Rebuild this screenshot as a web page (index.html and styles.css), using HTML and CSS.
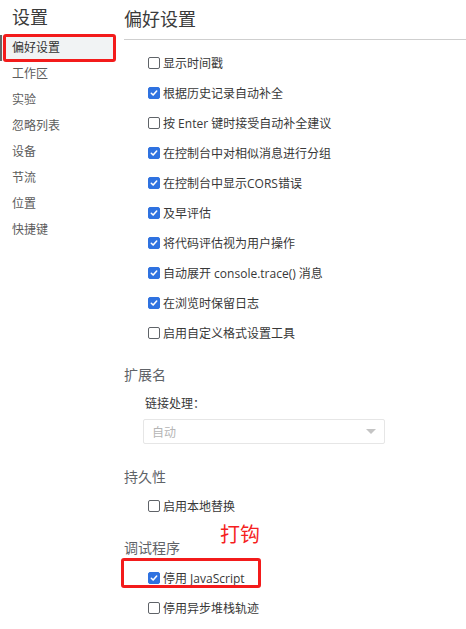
FILE: index.html
```html
<!DOCTYPE html>
<html lang="zh">
<head>
<meta charset="utf-8">
<link rel="stylesheet" href="styles.css">
</head>
<body>
<div class="app">
  <nav class="sidebar">
    <div class="side-title">设置</div>
    <div class="side-item selected">偏好设置</div>
    <div class="side-item">工作区</div>
    <div class="side-item">实验</div>
    <div class="side-item">忽略列表</div>
    <div class="side-item">设备</div>
    <div class="side-item">节流</div>
    <div class="side-item">位置</div>
    <div class="side-item">快捷键</div>
  </nav>
  <main class="main">
    <div class="main-title">偏好设置</div>
    <div class="list">
      <div class="row"><span class="cb"></span>显示时间戳</div>
      <div class="row"><span class="cb on"><svg viewBox="0 0 13 13"><path d="M3 6.8 L5.4 9.2 L10 4" /></svg></span>根据历史记录自动补全</div>
      <div class="row"><span class="cb"></span>按 Enter 键时接受自动补全建议</div>
      <div class="row"><span class="cb on"><svg viewBox="0 0 13 13"><path d="M3 6.8 L5.4 9.2 L10 4" /></svg></span>在控制台中对相似消息进行分组</div>
      <div class="row"><span class="cb on"><svg viewBox="0 0 13 13"><path d="M3 6.8 L5.4 9.2 L10 4" /></svg></span>在控制台中显示CORS错误</div>
      <div class="row"><span class="cb on"><svg viewBox="0 0 13 13"><path d="M3 6.8 L5.4 9.2 L10 4" /></svg></span>及早评估</div>
      <div class="row"><span class="cb on"><svg viewBox="0 0 13 13"><path d="M3 6.8 L5.4 9.2 L10 4" /></svg></span>将代码评估视为用户操作</div>
      <div class="row"><span class="cb on"><svg viewBox="0 0 13 13"><path d="M3 6.8 L5.4 9.2 L10 4" /></svg></span>自动展开 console.trace() 消息</div>
      <div class="row"><span class="cb on"><svg viewBox="0 0 13 13"><path d="M3 6.8 L5.4 9.2 L10 4" /></svg></span>在浏览时保留日志</div>
      <div class="row"><span class="cb"></span>启用自定义格式设置工具</div>
    </div>
    <div class="section-title first">扩展名</div>
    <div class="field-label">链接处理：</div>
    <div class="select"><span>自动</span><span class="arrow"></span></div>
    <div class="section-title second">持久性</div>
    <div class="row"><span class="cb"></span>启用本地替换</div>
    <div class="section-title third">调试程序</div>
    <div class="row"><span class="cb on"><svg viewBox="0 0 13 13"><path d="M3 6.8 L5.4 9.2 L10 4" /></svg></span>停用 JavaScript</div>
    <div class="row"><span class="cb"></span>停用异步堆栈轨迹</div>
  </main>
  <div class="mark mark-side"></div>
  <div class="mark mark-js"></div>
  <div class="note">打钩</div>
</div>
</body>
</html>
```

FILE: styles.css
```css
* { box-sizing: border-box; }
html, body { margin: 0; padding: 0; background: #fff; }
body {
  font-family: "Open Sans", "Noto Sans CJK SC", sans-serif;
  font-size: 12px;
  color: #383838;
  width: 466px;
  height: 629px;
  overflow: hidden;
}
.app { position: relative; display: flex; height: 629px; }
.sidebar { width: 118px; flex: none; }
.side-title {
  height: 35px;
  padding: 4px 0 0 12px;
  font-size: 18px;
  line-height: 26px;
  color: #3a3a3a;
}
.side-item {
  height: 26px;
  line-height: 26px;
  padding-left: 12px;
  color: #5c5c5c;
}
.side-item.selected {
  background: #f1f3f4;
  color: #333;
  box-shadow: inset 2px 0 0 #666;
  margin-right: 4px;
}
.main { flex: 1; padding-left: 6px; }
.main-title {
  height: 40px;
  padding-top: 6px;
  font-size: 18px;
  line-height: 26px;
  color: #3a3a3a;
  border-bottom: 1px solid #cfcfcf;
}
.list { padding-top: 8px; }
.row {
  display: flex;
  align-items: center;
  height: 30px;
  padding-left: 24px;
  color: #383838;
}
.cb {
  width: 12px;
  height: 12px;
  border: 1px solid #5f6368;
  border-radius: 2px;
  margin-right: 3px;
  flex: none;
  display: flex;
}
.cb.on { background: #2f72e0; border-color: #2f72e0; }
.cb svg { width: 10px; height: 10px; }
.cb path { fill: none; stroke: #fff; stroke-width: 2; stroke-linecap: round; stroke-linejoin: round; }
.section-title {
  height: 20px;
  line-height: 20px;
  font-size: 14px;
  color: #606368;
}
.section-title.first { margin-top: 17px; margin-bottom: 9px; }
.section-title.second { margin-top: 23px; margin-bottom: 4px; }
.section-title.third { margin-top: 17px; margin-bottom: 5px; }
.field-label {
  height: 20px;
  line-height: 20px;
  padding-left: 21px;
  color: #383838;
}
.select {
  margin: 5px 0 0 19px;
  width: 242px;
  height: 25px;
  border: 1px solid #e6e6e6;
  border-radius: 2px;
  display: flex;
  align-items: center;
  justify-content: space-between;
  padding: 0 8px 0 8px;
  color: #b5b5b5;
}
.arrow {
  width: 0; height: 0;
  border-left: 5px solid transparent;
  border-right: 5px solid transparent;
  border-top: 5px solid #c4c4c4;
}
.mark {
  position: absolute;
  border: 3px solid #f31b1b;
  border-radius: 3px;
}
.mark-side { left: 3px; top: 34px; width: 113px; height: 28px; }
.mark-js { left: 121px; top: 558px; width: 140px; height: 30px; }
.note {
  position: absolute;
  left: 220px;
  top: 520px;
  font-size: 20px;
  line-height: 28px;
  color: #f51f1f;
  font-family: "Noto Sans CJK SC", sans-serif;
}
```
